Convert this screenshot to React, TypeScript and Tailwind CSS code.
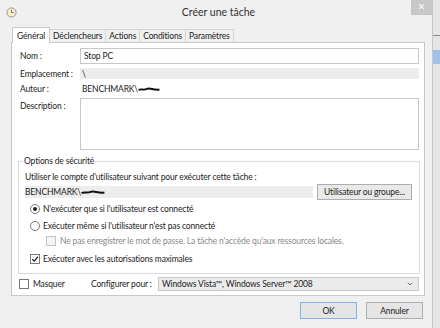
import { ChevronDown } from "lucide-react";

const Radio = ({ checked }: { checked?: boolean }) => (
  <span className="flex h-[10px] w-[10px] shrink-0 items-center justify-center rounded-full border border-[#7a7a7a] bg-white">
    {checked && <span className="h-[4px] w-[4px] rounded-full bg-[#222]" />}
  </span>
);

const Check = ({ checked, disabled }: { checked?: boolean; disabled?: boolean }) => (
  <span
    className={
      "flex h-[10px] w-[10px] shrink-0 items-center justify-center border " +
      (disabled ? "border-[#c4c4c4] bg-[#f4f4f4]" : "border-[#7a7a7a] bg-white")
    }
  >
    {checked && (
      <svg viewBox="0 0 10 10" className="h-[8px] w-[8px]">
        <path d="M1.5 5.2 L4 7.6 L8.6 2.2" fill="none" stroke="#222" strokeWidth="1.6" />
      </svg>
    )}
  </span>
);

// trait noir qui masque le nom d'utilisateur
const Scribble = ({ w }: { w: number }) => (
  <svg viewBox="0 0 40 8" width={w} height="7" className="shrink-0">
    <path d="M1 5 C6 2, 10 6, 16 3 S 28 6, 39 4" fill="none" stroke="#111" strokeWidth="3.4" />
  </svg>
);

const ClockIcon = () => (
  <svg viewBox="0 0 12 12" className="h-[11px] w-[11px]">
    <circle cx="6" cy="6" r="5" fill="#f7edc6" stroke="#8d8d8d" strokeWidth="1" />
    <path d="M6 3 V6 H8.4" fill="none" stroke="#6a6a6a" strokeWidth="1" />
  </svg>
);

const tabs = ["Général", "Déclencheurs", "Actions", "Conditions", "Paramètres"];

export default function App() {
  return (
    <div className="flex h-[328px] w-[440px] overflow-hidden bg-[#e6e6e6] font-['Lato',sans-serif] text-[8.5px] leading-[12px] tracking-[-0.15px] text-[#1c1c1c] whitespace-nowrap">
      <div className="flex w-[433px] shrink-0 flex-col border-r border-[#c6c6c6] bg-[#f0f0f0]">
        {/* barre de titre */}
        <div className="relative flex h-[24px] items-center px-[6px]">
          <ClockIcon />
          <div className="flex-1 pr-[6px] text-center text-[10.5px] tracking-normal text-[#333]">Créer une tâche</div>
          <div className="absolute right-[0px] top-0 flex h-[15px] w-[21px] items-center justify-center bg-[#c8c8c8] font-['DejaVu_Sans',sans-serif] text-[9px] leading-none text-white">
            ✕
          </div>
        </div>

        {/* onglets */}
        <div className="ml-[12px] flex h-[18px] items-end">
          {tabs.map((t, i) => (
            <div
              key={t}
              className={
                i === 0
                  ? "relative z-10 -mb-px flex h-[16px] items-center border border-b-0 border-[#c8c8c8] bg-white px-[4px]"
                  : "flex h-[13px] items-center border border-l-0 border-b-0 border-[#d4d4d4] bg-[#f0f0f0] px-[3px]"
              }
            >
              {t}
            </div>
          ))}
        </div>

        {/* panneau */}
        <div className="ml-[11px] flex h-[254px] w-[414px] flex-col border border-[#c8c8c8] bg-white">
          <div className="mt-[5px] flex h-[16px] items-center pl-[8px] pr-[5px]">
            <span className="w-[60px] shrink-0">Nom :</span>
            <div className="flex h-[16px] flex-1 items-center border border-[#c8c8c8] pl-[3px]">Stop PC</div>
          </div>
          <div className="mt-[4px] flex h-[11px] items-center pl-[8px] pr-[5px]">
            <span className="w-[60px] shrink-0">Emplacement :</span>
            <div className="flex h-[11px] flex-1 items-center bg-[#ededed] pl-[2px]">\</div>
          </div>
          <div className="mt-[4px] flex h-[12px] items-center pl-[8px] pr-[5px]">
            <span className="w-[62px] shrink-0">Auteur :</span>
            <span>BENCHMARK\</span>
            <Scribble w={22} />
          </div>
          <div className="mt-[3px] flex pl-[8px] pr-[5px]">
            <span className="mt-[2px] w-[60px] shrink-0">Description :</span>
            <div className="h-[52px] flex-1 border border-[#c8c8c8]" />
          </div>

          {/* options de sécurité */}
          <div className="relative ml-[6px] mr-[4px] mt-[11px] flex flex-col border border-[#dcdcdc] pb-[8px] pl-[6px]">
            <span className="absolute -top-[7px] left-[4px] bg-white px-[1px]">Options de sécurité</span>
            <div className="mt-[9px] flex h-[12px] items-center">
              Utiliser le compte d'utilisateur suivant pour exécuter cette tâche :
            </div>
            <div className="mt-[1px] flex h-[16px] items-center">
              <div className="flex h-[12px] w-[288px] items-center bg-[#ededed]">
                <span>BENCHMARK\</span>
                <Scribble w={24} />
              </div>
              <div className="ml-[4px] flex h-[16px] w-[95px] items-center justify-center border border-[#adadad] bg-[#e9e9e9]">
                Utilisateur ou groupe...
              </div>
            </div>
            <div className="mt-[3px] flex h-[12px] items-center gap-[3px] pl-[5px]">
              <Radio checked />
              <span>N'exécuter que si l'utilisateur est connecté</span>
            </div>
            <div className="mt-[5px] flex h-[12px] items-center gap-[3px] pl-[5px]">
              <Radio />
              <span>Exécuter même si l'utilisateur n'est pas connecté</span>
            </div>
            <div className="mt-[3px] flex h-[12px] items-center gap-[4px] pl-[21px]">
              <Check disabled />
              <span className="text-[#8a8a8a]">
                Ne pas enregistrer le mot de passe. La tâche n'accède qu'aux ressources locales.
              </span>
            </div>
            <div className="mt-[6px] flex h-[12px] items-center gap-[3px] pl-[5px]">
              <Check checked />
              <span>Exécuter avec les autorisations maximales</span>
            </div>
          </div>

          <div className="mt-[3px] flex h-[14px] items-center pl-[7px] pr-[5px]">
            <Check />
            <span className="ml-[4px] w-[58px]">Masquer</span>
            <span className="w-[67px]">Configurer pour :</span>
            <div className="flex h-[14px] flex-1 items-center justify-between border border-[#c8c8c8] bg-[#ebebeb] pl-[3px] pr-[4px]">
              <span>Windows Vista™, Windows Server™ 2008</span>
              <ChevronDown className="h-[8px] w-[8px] text-[#555]" strokeWidth={2.5} />
            </div>
          </div>
        </div>

        {/* boutons */}
        <div className="mt-[6px] flex justify-end gap-[9px] pr-[9px]">
          <div className="flex h-[17px] w-[57px] items-center justify-center border border-[#7eb4ea] bg-[#e5e5e5]">OK</div>
          <div className="flex h-[17px] w-[57px] items-center justify-center border border-[#adadad] bg-[#e5e5e5]">Annuler</div>
        </div>
      </div>
      <div className="flex flex-1 flex-col">
        <div className="mt-[35px] h-px w-full bg-[#8a8a8a]" />
        <div className="mt-[14px] h-[14px] w-full bg-[#9fc3e8]" />
      </div>
    </div>
  );
}
